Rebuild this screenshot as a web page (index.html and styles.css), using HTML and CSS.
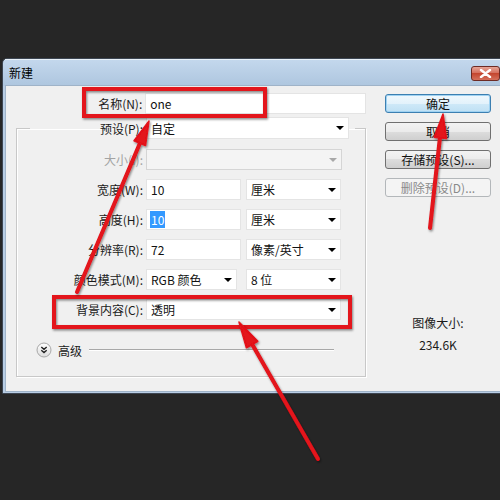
FILE: index.html
```html
<!DOCTYPE html>
<html>
<head>
<meta charset="utf-8">
<link rel="stylesheet" href="styles.css">
</head>
<body>
<div class="screen">
  <div class="dialog">
    <div class="titlebar">
      <span class="title">新建</span>
      <span class="close">
        <svg width="13" height="9" viewBox="0 0 13 9"><path d="M2 1 L11 8 M11 1 L2 8" stroke="#fff" stroke-width="2.4" stroke-linecap="round"/></svg>
      </span>
    </div>
    <div class="body">
      <div class="main">
        <div class="row name-row">
          <span class="lbl name-lbl">名称(N):</span>
          <div class="input name-input">one</div>
        </div>
        <fieldset class="group">
          <legend class="preset">
            <span class="lbl preset-lbl">预设(P):</span>
            <div class="select preset-sel">自定<i class="arrow"></i></div>
          </legend>
          <div class="row">
            <span class="lbl dis">大小(I):</span>
            <div class="select disabled size-sel"><i class="arrow grey"></i></div>
          </div>
          <div class="row">
            <span class="lbl">宽度(W):</span>
            <div class="input half">10</div>
            <div class="select half">厘米<i class="arrow"></i></div>
          </div>
          <div class="row">
            <span class="lbl">高度(H):</span>
            <div class="input half"><span class="sel-text">10</span></div>
            <div class="select half">厘米<i class="arrow"></i></div>
          </div>
          <div class="row">
            <span class="lbl">分辨率(R):</span>
            <div class="input half">72</div>
            <div class="select half">像素/英寸<i class="arrow"></i></div>
          </div>
          <div class="row">
            <span class="lbl">颜色模式(M):</span>
            <div class="select mode-sel">RGB 颜色<i class="arrow"></i></div>
            <div class="select half">8 位<i class="arrow"></i></div>
          </div>
          <div class="row">
            <span class="lbl">背景内容(C):</span>
            <div class="select bg-sel">透明<i class="arrow"></i></div>
          </div>
          <div class="advanced">
            <svg class="adv-icon" width="16" height="16" viewBox="0 0 16 16">
              <defs><linearGradient id="cg" x1="0" y1="0" x2="0" y2="1"><stop offset="0" stop-color="#ffffff"/><stop offset="1" stop-color="#dcdcdc"/></linearGradient></defs>
              <circle cx="8" cy="8" r="7" fill="url(#cg)" stroke="#a8a8a8"/>
              <path d="M5.3 5 L8 7.3 L10.7 5 M5.3 8.3 L8 10.6 L10.7 8.3" fill="none" stroke="#222" stroke-width="1.4"/>
            </svg>
            <span class="adv-text">高级</span>
            <span class="adv-line"></span>
          </div>
        </fieldset>
      </div>
      <div class="side">
        <div class="btn default">确定</div>
        <div class="btn">取消</div>
        <div class="btn">存储预设(S)...</div>
        <div class="btn off">删除预设(D)...</div>
        <div class="info">
          <div>图像大小:</div>
          <div>234.6K</div>
        </div>
      </div>
    </div>
  </div>
  <svg class="annot" width="500" height="500" viewBox="0 0 500 500">
    <defs>
      <filter id="sh" x="-10%" y="-10%" width="120%" height="120%">
        <feDropShadow dx="1" dy="1.5" stdDeviation="1.2" flood-color="#000" flood-opacity="0.45"/>
      </filter>
    </defs>
    <g filter="url(#sh)" fill="none" stroke="#e3121a" stroke-width="4">
      <rect x="84" y="89" width="181" height="27"/>
      <rect x="54" y="297" width="296" height="30"/>
    </g>
    <g filter="url(#sh)" stroke="#e3121a" stroke-width="4" stroke-linecap="round" fill="#e3121a">
      <line x1="77" y1="292" x2="140" y2="143"/>
      <polygon points="149,121 145.5,145.5 134,140.8" stroke-width="1.5" stroke-linejoin="round"/>
      <line x1="430" y1="228" x2="440" y2="137"/>
      <polygon points="443,114 446.5,138.6 434.2,137.2" stroke-width="1.5" stroke-linejoin="round"/>
      <line x1="318" y1="459" x2="252" y2="344"/>
      <polygon points="239,322 257.8,341.3 246.4,347.8" stroke-width="1.5" stroke-linejoin="round"/>
    </g>
  </svg>
</div>
</body>
</html>
```

FILE: styles.css
```css
html, body {
  margin: 0;
  padding: 0;
  overflow: hidden;
}
body {
  background: #262626;
  font-family: "Noto Sans CJK SC", "Noto Sans", sans-serif;
  font-size: 12px;
  color: #111;
}
.screen {
  position: relative;
  width: 500px;
  height: 500px;
  padding-top: 58px;
  box-sizing: border-box;
  overflow: hidden;
}
.dialog {
  margin-left: 2px;
  width: 503px;
  border: 1px solid #3d4652;
  border-radius: 5px 5px 0 0;
  background: linear-gradient(#c4d8ed, #aec6df 27px, #b8cde4 27px);
  box-sizing: border-box;
  padding: 0 0 1px 2px;
}
.titlebar {
  height: 26px;
  display: flex;
  align-items: center;
  justify-content: space-between;
  box-shadow: inset 0 1px 0 #e8f0f8;
}
.title {
  margin-left: 4px;
  margin-top: 1px;
  color: #000;
}
.close {
  margin-right: 4px;
  margin-top: 2px;
  width: 29px;
  height: 15px;
  box-sizing: border-box;
  border: 1px solid #6d2b24;
  border-radius: 3px;
  background: linear-gradient(#e6a597, #d46a58 50%, #c4462f 50%, #d4705c);
  display: flex;
  align-items: center;
  justify-content: center;
}
.body {
  background: #f0f0f0;
  border: 1px solid #9fb3c8;
  border-right: none;
  height: 307px;
  box-sizing: border-box;
  display: flex;
  padding: 7px 0 0 10px;
}
.main {
  width: 350px;
}
.row {
  display: flex;
  align-items: center;
  height: 21px;
  margin-bottom: 9px;
}
.lbl {
  width: 126px;
  text-align: right;
  margin-right: 3px;
  white-space: nowrap;
  color: #1a1a1a;
}
.lbl.dis {
  color: #a3a3a3;
}
.name-row {
  margin-bottom: 3px;
}
.name-lbl {
  width: 127px;
}
.input, .select {
  height: 21px;
  box-sizing: border-box;
  background: #fff;
  border: 1px solid #e4e4e4;
  display: flex;
  align-items: center;
  padding-left: 4px;
  white-space: nowrap;
}
.name-input {
  width: 222px;
}
.half {
  width: 95px;
}
.input.half {
  margin-right: 5px;
}
.mode-sel {
  width: 91px;
  margin-right: 9px;
}
.bg-sel {
  width: 195px;
}
.size-sel {
  width: 196px;
}
.select.disabled {
  background: #f4f4f4;
  border-color: #d5d5d5;
}
.arrow {
  margin-left: auto;
  margin-right: 4px;
  width: 0;
  height: 0;
  border-left: 4px solid transparent;
  border-right: 4px solid transparent;
  border-top: 4px solid #000;
}
.arrow.grey {
  border-top-color: #a8a8a8;
}
.sel-text {
  background: #3399ff;
  color: #fff;
  line-height: 17px;
  padding: 0 1px;
  margin-left: -1px;
}
.group {
  margin: 0;
  padding: 10px 0 18px 0;
  min-width: 0;
  width: 350px;
  box-sizing: border-box;
  border: 1px solid #c8c8c8;
  box-shadow: 1px 1px 0 #fff, inset 1px 1px 0 #fff;
}
.preset {
  padding: 0 6px 0 0;
  margin-left: 13px;
  display: flex;
  align-items: center;
}
.preset-lbl {
  width: 113px;
}
.preset-sel {
  width: 203px;
  height: 22px;
}
.advanced {
  display: flex;
  align-items: center;
  height: 16px;
  margin-top: 22px;
  padding-left: 19px;
}
.adv-text {
  margin-left: 6px;
  color: #1a1a1a;
}
.adv-line {
  flex: 1;
  height: 0;
  border-top: 1px solid #a8a8a8;
  border-bottom: 1px solid #fff;
  margin: 0 31px 0 7px;
}
.side {
  margin-left: 19px;
  padding-top: 1px;
  width: 106px;
  display: flex;
  flex-direction: column;
}
.btn {
  height: 19px;
  margin-bottom: 9px;
  box-sizing: border-box;
  border: 1px solid #707070;
  border-radius: 3px;
  background: linear-gradient(#f3f3f3, #ebebeb 50%, #dddddd 50%, #cfcfcf);
  display: flex;
  align-items: center;
  justify-content: center;
  color: #111;
  white-space: nowrap;
}
.btn.default {
  border-color: #3c7fb1;
  background: linear-gradient(#f0f8fd, #e3f2fb 50%, #cfe9f8 50%, #bfe0f4);
  box-shadow: inset 0 0 0 1px #9fd2f2;
}
.btn.off {
  border-color: #b3b7ba;
  background: #f4f4f4;
  color: #8a8a8a;
}
.info {
  margin-top: 106px;
  text-align: center;
  line-height: 22px;
  color: #1a1a1a;
}
.annot {
  position: absolute;
  left: 0;
  top: 0;
  pointer-events: none;
}
```
